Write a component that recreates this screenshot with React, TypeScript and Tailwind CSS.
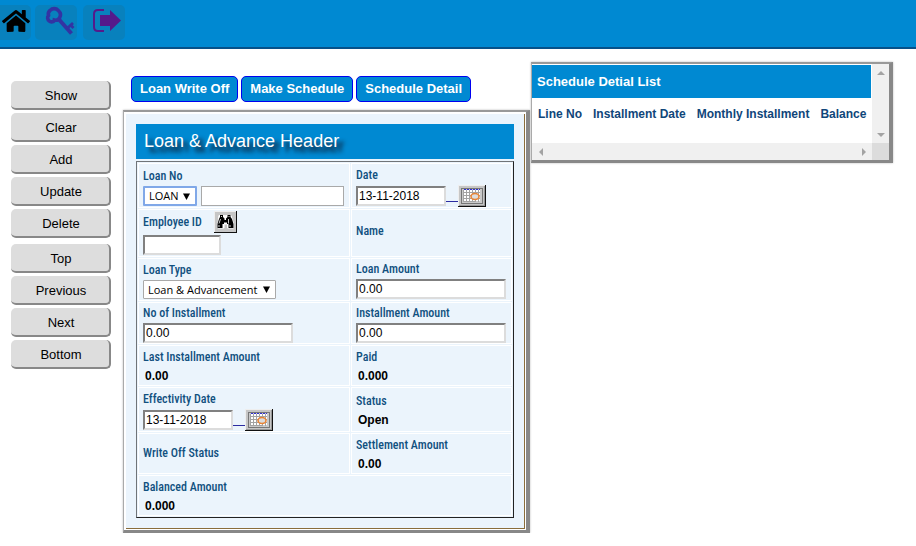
import React from "react";
import { FaHome } from "react-icons/fa";

const labelCls = "block text-[12px] leading-4 font-medium text-[#10507f] font-['Arial_Narrow','Roboto_Condensed','Roboto',sans-serif]";
const insetCls =
  "h-5 border-2 border-t-[#808080] border-l-[#808080] border-r-[#dcdcdc] border-b-[#dcdcdc] bg-white px-px text-[12px] text-black outline-none";

function SideButton({ children }: { children: React.ReactNode }) {
  return (
    <button className="h-[29px] w-full rounded-[5px] border-r-2 border-b-2 border-[#888] bg-[#ddd] pt-0.5 pl-0.5 text-[13px] text-black">
      {children}
    </button>
  );
}

function TabButton({ children }: { children: React.ReactNode }) {
  return (
    <button className="h-[26px] rounded-[5px] border border-[#0000f0] bg-[#0089d2] px-2 text-[13px] font-bold whitespace-nowrap text-white">
      {children}
    </button>
  );
}

function Cell({ className = "justify-end", children }: { className?: string; children: React.ReactNode }) {
  return (
    <div className={`flex flex-col gap-0.5 border border-white bg-[#ebf4fc] pr-1 pl-1 ${className}`}>
      {children}
    </div>
  );
}

function ReadOnly({ label, value }: { label: string; value: string }) {
  return (
    <>
      <span className={labelCls}>{label}</span>
      <span className="pl-0.5 text-[12px] leading-[18px] font-bold text-black">{value}</span>
    </>
  );
}

function TextField({ id, label, value }: { id: string; label: string; value: string }) {
  return (
    <>
      <label htmlFor={id} className={labelCls}>{label}</label>
      <input id={id} defaultValue={value} className={`${insetCls} w-[150px]`} />
    </>
  );
}

function DateField({ id, label }: { id: string; label: string }) {
  return (
    <>
      <label htmlFor={id} className={labelCls}>{label}</label>
      <div className="flex items-center">
        <input id={id} defaultValue="13-11-2018" className={`${insetCls} w-[90px]`} />
        <span className="mt-2.5 h-px w-3 bg-[#2b2ba0]" />
        <button type="button" aria-label={`Pick ${label}`} className="h-[22px] w-7">
          <svg viewBox="0 0 28 22" className="block h-[22px] w-7" shapeRendering="crispEdges">
            <rect width="28" height="22" fill="#111" />
            <rect width="27" height="21" fill="#eee" />
            <rect x="1" y="1" width="26" height="20" fill="#999" />
            <rect x="1" y="1" width="25" height="19" fill="#c6c6c6" />
            <rect x="3.5" y="3.5" width="21" height="15" fill="#c9c9c9" stroke="#777" />
            <rect x="6" y="5" width="16" height="11" fill="#fff" />
            <path d="M6 4.5h16" stroke="#3030d0" strokeDasharray="2 1" />
            <path d="M5.5 5v12M8.5 5v12M11.5 5v12M14.5 5v12M17.5 5v12M20.5 5v12M5 7.5h17M5 10.5h17M5 13.5h17M5 16.5h12" stroke="#a3a3a3" />
            <ellipse cx="17" cy="11.5" rx="4" ry="3" fill="#ddd" stroke="#e88435" strokeWidth="1.6" shapeRendering="auto" />
          </svg>
        </button>
      </div>
    </>
  );
}

function Picker({ id, text, className, label }: { id: string; text: string; className: string; label?: string }) {
  return (
    <div className={`relative ${className}`}>
      <select
        id={id}
        aria-label={label}
        className="block h-full w-full appearance-none pl-1 font-['Open_Sans','Noto_Sans',sans-serif] text-[11px] leading-4 text-black outline-none"
      >
        <option>{text}</option>
      </select>
      <svg viewBox="0 0 7 7" className="pointer-events-none absolute top-[5px] right-[5px] h-[7px] w-[7px]">
        <path d="M0 0.5h7L3.5 7z" />
      </svg>
    </div>
  );
}

function Arrow({ d, label }: { d: string; label: string }) {
  return (
    <button aria-label={label} className="flex h-[17px] w-[17px] items-center justify-center">
      <svg viewBox="0 0 8 8" className="h-2 w-2" fill="#a3a3a3"><path d={d} /></svg>
    </button>
  );
}

const iconBox = "flex h-[35px] w-[42px] items-start justify-center rounded-[5px] bg-[#0881bd]";
const frame = "border-t-2 border-r-4 border-b-[3px] border-l border-t-[#999] border-r-[#888] border-b-[#888] border-l-[#aaa] shadow-[0_0_2px_#bbb]";

export default function App() {
  return (
    <div className="overflow-x-hidden bg-white font-['Liberation_Sans',Arial,sans-serif]">
      <header className="flex h-[49px] items-start border-b-2 border-[#06518a] bg-[#0089d2] pt-[5px]">
        <a href="#home" aria-label="Home" className="mr-1 flex h-[35px] w-[31px] justify-center rounded-r-[5px] bg-[#0881bd] pt-0.5 text-black">
          <FaHome className="h-7 w-7" />
        </a>
        <a href="#password" aria-label="Change password" className={`${iconBox} mr-1.5`}>
          <svg viewBox="0 0 42 35" className="h-[35px] w-[42px]" fill="none" stroke="#3333a3">
            <path d="M15 5.500c2.500-2.500 6-2.500 8.300 0 2.500 2.300 2.700 5 1.200 7.500-1.200 2-3.200 2.500-5.200 2-.3 2-3.500 2.500-5 1-2-1.500-2.200-4-.8-5.500-.5-2 0-3.800 1.500-5z" strokeWidth="3.600" />
            <path d="M24 14.500L36.500 28.500" strokeWidth="4" />
            <path d="M32 23.500l6-5.500M35 19.500l3.500 3.500" strokeWidth="2.800" />
          </svg>
        </a>
        <a href="#logout" aria-label="Log out" className={iconBox}>
          <svg viewBox="0 0 42 35" className="h-[35px] w-[42px]">
            <path d="M21 5h-6c-2.700 0-4 1.300-4 4v13c0 2.700 1.300 4 4 4h6" fill="none" stroke="#551a8b" strokeWidth="2" />
            <path d="M17 10h10V5l11 10.500L27 26v-5H17z" fill="#551a8b" />
          </svg>
        </a>
      </header>

      <div className="flex items-start">
        <nav className="mt-8 ml-[11px] flex w-[100px] shrink-0 flex-col gap-[3px]">
          <SideButton>Show</SideButton>
          <SideButton>Clear</SideButton>
          <SideButton>Add</SideButton>
          <SideButton>Update</SideButton>
          <SideButton>Delete</SideButton>
          <div className="mt-[3px] flex flex-col gap-[3px]">
            <SideButton>Top</SideButton>
            <SideButton>Previous</SideButton>
            <SideButton>Next</SideButton>
            <SideButton>Bottom</SideButton>
          </div>
        </nav>

        <main className="mt-[27px] ml-3 w-[407px] shrink-0">
          <div className="flex gap-[3px] pl-2">
            <TabButton>Loan Write Off</TabButton>
            <TabButton>Make Schedule</TabButton>
            <TabButton>Schedule Detail</TabButton>
          </div>
          <form className={`mt-2 ${frame}`}>
            <div className="border-t-2 border-r border-b border-l-2 border-white">
              <div className="border-r border-b border-[#8a6d3b] bg-[#ebf4fc] px-2.5 py-2.5">
                <h1 className="h-[35px] bg-[#0089d2] pl-2 text-[18px] leading-[34px] text-white [text-shadow:5px_5px_4px_#112]">
                  Loan &amp; Advance Header
                </h1>
                <div className="mt-0.5 grid grid-cols-[212px_1fr] gap-px border border-t-[#707478] border-r-[#222] border-b-[#222] border-l-[#707478] p-px">
                  <Cell className="h-[45px] justify-end pb-px">
                    <label htmlFor="loan-no" className={labelCls}>Loan No</label>
                    <div className="flex gap-1">
                      <Picker id="loan-type-code" label="Loan prefix" text="LOAN" className="h-5 w-[54px] rounded-[1px] border-2 border-[#80a8e8] bg-white" />
                      <input id="loan-no" className="h-5 w-[143px] border border-[#a9a9a9] bg-white px-1 text-[12px] outline-none" />
                    </div>
                  </Cell>
                  <Cell className="h-[45px] justify-end"><DateField id="date" label="Date" /></Cell>

                  <Cell className="h-12 justify-end pb-px">
                    <div className="flex items-center gap-3">
                      <label htmlFor="employee" className={labelCls}>Employee ID</label>
                      <button type="button" aria-label="Find employee" className="h-[22px] w-[23px]">
                        <svg viewBox="0 0 23 22" className="block h-[22px] w-[23px]">
                          <path fill="#111" d="M0 0h23v22H0z" />
                          <path fill="#eee" d="M0 0h22v21H0z" />
                          <path fill="#c6c6c6" d="M1 1h21v20H1z" />
                          <path d="M5 4.500h5.500v3h1v-3H17l2.500 8V17h-6v-4h-3.500v4h-6v-4.500z" fill="#fff" stroke="#fff" strokeWidth="1" />
                          <path d="M6 4h3v2l1.500 1.500V9h1.500V7.500L13.500 6V4h3v2l1.500 2 1.500 5v4h-5v-4h-1.500v-1.500h-3V13H8.500v4h-5v-4L5 8l1-2z" fill="#000" />
                          <path d="M7.500 5v1M15 5v1M6.500 8l-1.500 4.500M14.500 8v4.500M5 14v2M16 14v2" stroke="#fff" strokeWidth=".8" />
                        </svg>
                      </button>
                    </div>
                    <input id="employee" className={`${insetCls} w-[78px]`} />
                  </Cell>
                  <Cell className="h-12 justify-center pb-1"><span className={labelCls}>Name</span></Cell>

                  <Cell className="h-[43px] justify-end pb-px">
                    <label htmlFor="loan-type" className={labelCls}>Loan Type</label>
                    <Picker id="loan-type" text="Loan & Advancement" className="h-[19px] w-[133px] rounded-[1px] border border-[#a9a9a9] bg-white" />
                  </Cell>
                  <Cell className="h-[43px] justify-end pb-px"><TextField id="loan-amount" label="Loan Amount" value="0.00" /></Cell>

                  <Cell className="h-[42px] justify-end"><TextField id="installments" label="No of Installment" value="0.00" /></Cell>
                  <Cell className="h-[42px] justify-end"><TextField id="installment-amount" label="Installment Amount" value="0.00" /></Cell>

                  <Cell className="h-[41px] justify-end"><ReadOnly label="Last Installment Amount" value="0.00" /></Cell>
                  <Cell className="h-[41px] justify-end"><ReadOnly label="Paid" value="0.000" /></Cell>

                  <Cell className="h-[45px] justify-end"><DateField id="effectivity" label="Effectivity Date" /></Cell>
                  <Cell className="h-[45px] justify-end pb-0.5"><ReadOnly label="Status" value="Open" /></Cell>

                  <Cell className="h-[41px] justify-center pb-0.5"><span className={labelCls}>Write Off Status</span></Cell>
                  <Cell className="h-[41px] justify-end"><ReadOnly label="Settlement Amount" value="0.00" /></Cell>

                  <Cell className="col-span-2 h-[41px] justify-end"><ReadOnly label="Balanced Amount" value="0.000" /></Cell>
                </div>
              </div>
            </div>
          </form>
        </main>

        <section className={`mt-[13px] ml-px w-[362px] shrink-0 bg-white ${frame}`}>
          <div className="flex">
            <div className="min-w-0 flex-1 pt-px pr-px">
              <h2 className="h-[33px] bg-[#0089d2] pl-[5px] text-[13px] leading-[33px] font-bold text-white">Schedule Detial List</h2>
              <table className="text-left text-[12px] leading-4 whitespace-nowrap text-[#10467a]">
                <thead>
                  <tr>
                    <th className="pt-2 pl-1.5">Line No</th>
                    <th className="pt-2 pl-[11px]">Installment Date</th>
                    <th className="pt-2 pl-[11px]">Monthly Installment</th>
                    <th className="pt-2 pl-[11px]">Balance</th>
                  </tr>
                </thead>
              </table>
            </div>
            <div className="flex h-[79px] flex-col justify-between bg-[#f0f0f0]">
              <Arrow label="Scroll up" d="M0 6h8L4 2z" />
              <Arrow label="Scroll down" d="M0 2h8L4 6z" />
            </div>
          </div>
          <div className="flex">
            <div className="flex flex-1 justify-between bg-[#f0f0f0]">
              <Arrow label="Scroll left" d="M6 0v8L2 4z" />
              <Arrow label="Scroll right" d="M2 0v8l4-4z" />
            </div>
            <div className="h-[17px] w-[17px] bg-[#dcdcdc]" />
          </div>
        </section>
      </div>
    </div>
  );
}
